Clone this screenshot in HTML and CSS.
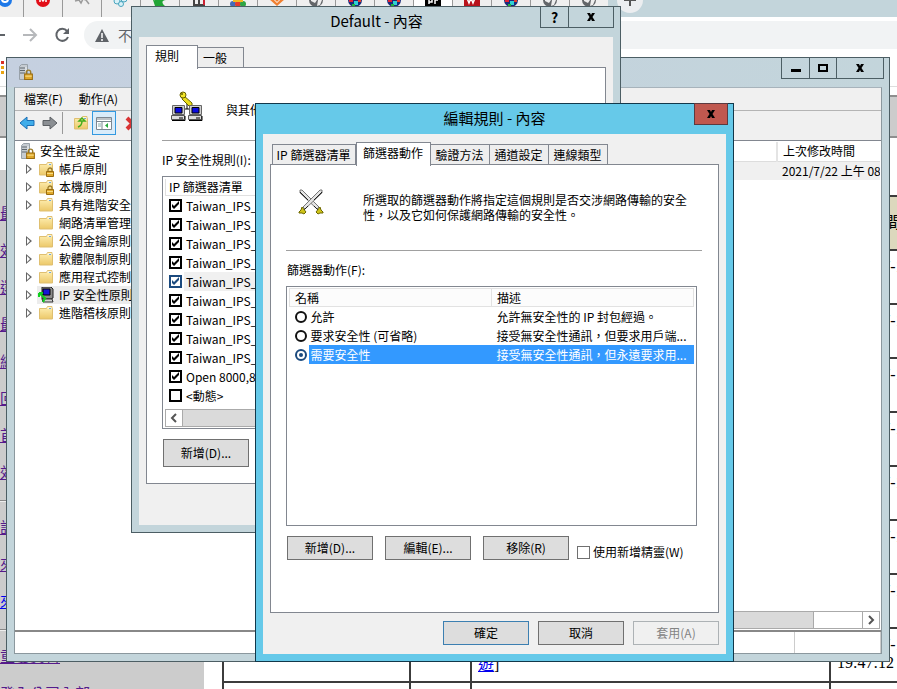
FILE: index.html
```html
<!DOCTYPE html>
<html lang="zh-Hant">
<head>
<meta charset="utf-8">
<title>編輯規則 - 內容</title>
<link rel="stylesheet" href="styles.css">
</head>
<body>
<svg class="defs" aria-hidden="true">
  <defs>
    <linearGradient id="fold" x1="0" y1="0" x2="0" y2="1"><stop offset="0" stop-color="#fff0b4"/><stop offset="1" stop-color="#ecc869"/></linearGradient>
    <symbol id="folder" viewBox="0 0 16 16"><path d="M1.5 3.5h7l1-2h4.5v2h.5v10.500h-13z" fill="url(#fold)" stroke="#dfbf70"/><path d="M9.500 3h4" stroke="#fff" /><path d="M11 3.500h2" stroke="#6ba6dc"/></symbol>
    <symbol id="lock" viewBox="0 0 8 10"><path d="M2 5V3a2 2 0 0 1 4 0v2" fill="none" stroke="#9a7b2a" stroke-width="1.300"/><path d="M.5 4.500h7v5h-7z" fill="#e0a92c" stroke="#9a6c10"/><path d="M1 6.500h6" stroke="#f8dc83"/></symbol>
    <symbol id="folderlock" viewBox="0 0 16 16"><use href="#folder" width="16" height="16"/><use href="#lock" x="8" y="6" width="8" height="10"/></symbol>
    <symbol id="server" viewBox="0 0 16 16"><path d="M1.500 2.500l2-2h6v13l-2 2h-6z" fill="#c6ccd2" stroke="#98a1a9"/><path d="M2 4h5M2 6.500h5M2 9h5" stroke="#5e676f"/><path d="M8 3v11" stroke="#eef1f3"/><use href="#lock" x="6" y="5" width="9" height="11"/></symbol>
    <symbol id="ipsec" viewBox="0 0 16 16"><path d="M4 0h9l2 2v9l-2 1H4z" fill="#8b8b8b" stroke="#222"/><path d="M5 2h7v6H5z" fill="#1515d8" stroke="#000"/><path d="M4 12h10l1 3H5z" fill="#d2d2d2" stroke="#333"/><path d="M1 6l7 6M1 6h4M1 6v4M7 11l-2 4" stroke="#10d020" stroke-width="2"/></symbol>
    <symbol id="globe" viewBox="0 0 16 16"><circle cx="8" cy="8" r="7" fill="#636669"/><path d="M3 4l4 1 2 3-2 3-4-2zM10 8l4 0-2 5-3 1z" fill="#eee"/></symbol>
    <symbol id="multi" viewBox="0 0 16 16"><circle cx="8" cy="8" r="7" fill="#192a7b"/><path d="M2 6h4v4H2z" fill="#e32235"/><path d="M7 9h4v4H7z" fill="#30d1d5"/><path d="M11 6h3v4h-3z" fill="#e43d2b"/><path d="M5 12h3v2H5z" fill="#22b33b"/></symbol>
  </defs>
</svg>

<div class="desktop">
  <div class="browser">
    <div class="tabstrip">
      <div class="btab"><svg viewBox="0 0 16 16"><circle cx="8" cy="8" r="7" fill="#1d78e8"/><circle cx="8" cy="7" r="4" fill="#fff"/><circle cx="8" cy="7" r="2" fill="#1d78e8"/></svg></div>
      <div class="btab"><svg viewBox="0 0 16 16"><circle cx="8" cy="8" r="7" fill="#e20e18"/><path d="M5 10V5l3 4 3-4v5" fill="none" stroke="#fff" stroke-width="1.500"/></svg></div>
      <div class="btab"><svg viewBox="0 0 16 16"><path d="M1 9l4-1 2 3 2-4 3 1 3 4" fill="none" stroke="#9a9a9a" stroke-width="1.500"/></svg></div>
      <div class="btab"><svg viewBox="0 0 16 16"><g fill="#d8f1f8" stroke="#4aa5be"><circle cx="4" cy="9" r="3"/><circle cx="11" cy="7" r="3"/><circle cx="8" cy="12" r="2.500"/></g></svg></div>
      <div class="btab"><svg viewBox="0 0 16 16"><path d="M1 8c4 1 7-3 13 0-4 0-5 3-1 6H3z" fill="#21a535"/></svg></div>
      <div class="btab"><svg viewBox="0 0 16 16"><path d="M2 1h12v13H2z" fill="#444"/><path d="M4 8h3v4H4zM9 8h3v4H9z" fill="#eee"/><path d="M12 7h2v6h-2z" fill="#c23"/></svg></div>
      <div class="btab"><svg viewBox="0 0 16 16"><circle cx="3" cy="12" r="3" fill="#466bb8"/><circle cx="8" cy="12" r="3" fill="#e43b2d"/><circle cx="13" cy="12" r="3" fill="#2da544"/><path d="M3 9h10" stroke="#f4b820" stroke-width="2"/></svg></div>
      <div class="btab"><svg viewBox="0 0 16 16"><path d="M8 0l8 7-8 7-8-7z" fill="#f08030"/><path d="M8 3l4 4-4 4-4-4z" fill="#fff"/><path d="M8 6l2 2-2 2-2-2z" fill="#f08030"/></svg></div>
      <div class="btab"><svg><use href="#globe"/></svg></div>
      <div class="btab"><svg><use href="#multi"/></svg></div>
      <div class="btab"><svg><use href="#multi"/></svg></div>
      <div class="btab current"><svg viewBox="0 0 16 16"><path d="M0 0h16v14H0z" fill="#000"/><path d="M4 12V7h3v3H4M10 12V8h3" fill="none" stroke="#fff" stroke-width="1.500"/></svg></div>
      <div class="btab"><svg viewBox="0 0 16 16"><path d="M0 0h16v14H0z" fill="#b8121b"/><path d="M3 6l2 5 2-5 2 5 2-5" fill="none" stroke="#fff" stroke-width="1.500"/></svg></div>
      <div class="btab"><svg><use href="#multi"/></svg></div>
      <div class="btab"><svg><use href="#globe"/></svg></div>
      <div class="btab"><svg><use href="#globe"/></svg></div>
      <button class="newtab" aria-label="+"><svg viewBox="0 0 28 28"><circle cx="14" cy="14" r="13" fill="#eceef0"/><path d="M14 8v12M8 14h12" stroke="#555" stroke-width="2"/></svg></button>
    </div>
    <div class="navbar">
      <svg class="navicons" viewBox="0 0 76 28"><path d="M-4 14h9" stroke="#5f6368" stroke-width="2"/><path d="M23 14h13M30 8l6 6-6 6" fill="none" stroke="#b6b8bb" stroke-width="2"/><path d="M67 10a6 6 0 1 0 1 6" fill="none" stroke="#5f6368" stroke-width="2"/><path d="M69 7v6h-6z" fill="#5f6368"/></svg>
      <div class="omnibox"><svg viewBox="0 0 14 13"><path d="M7 0l7 13H0z" fill="#5f6368"/><path d="M7 4v5M7 10v2" stroke="#fff" stroke-width="1.500"/></svg><span>不安全</span></div>
    </div>
    <div class="bookmarks"><svg viewBox="0 0 6 16"><path d="M1 1h3v3H1z" fill="#d93025"/><path d="M1 6h3v3H1zM1 11h3v3H1z" fill="#eaa412"/></svg></div>
    <div class="banner"></div>
    <div class="gap"></div>
    <div class="page">
      <nav class="side">
        <a href="#">最新消息</a><a href="#">效能報表</a><a href="#">還原記錄</a><a href="#">最新圖表</a><a href="#">網路設定</a><a href="#">回報問題</a><a href="#">首頁設定</a><a href="#">效能設定</a>
        <hr>
        <a href="#">設定工具</a><a href="#">來源清單</a><a class="fresh" href="#">來源報表</a>
        <hr>
        <a href="#">重要資料</a><a href="#">登入公司內部</a>
      </nav>
      <table class="log">
        <colgroup><col class="c1"><col class="c2"><col class="c3"><col class="c4"></colgroup>
        <tr><th></th><th></th><th></th><th>建立時間</th></tr>
        <tr><td></td><td></td><td></td><td>2021-07-17</td></tr>
        <tr><td></td><td></td><td></td><td>2021-07-17</td></tr>
        <tr><td></td><td></td><td></td><td>2021-07-17</td></tr>
        <tr><td></td><td></td><td></td><td>2021-07-17</td></tr>
        <tr><td></td><td></td><td></td><td>2021-07-17</td></tr>
        <tr><td></td><td></td><td></td><td>2021-07-17</td></tr>
        <tr><td></td><td></td><td></td><td>2021-07-17</td></tr>
        <tr><td></td><td></td><td class="low"><a href="#">遊</a>]</td><td>2021-07-17<br>19:47:12</td></tr>
        <tr><td></td><td></td><td></td><td></td></tr>
      </table>
    </div>
  </div>

  <section class="window console" aria-label="安全性設定">
    <header class="titlebar">
      <svg class="appicon"><use href="#server"/></svg>
      <div class="winbtns">
        <button aria-label="最小化"><svg viewBox="0 0 12 12"><path d="M1 7h10v3H1z"/></svg></button>
        <button aria-label="最大化"><svg viewBox="0 0 12 12"><path d="M2 3h8v6H2z" fill="none" stroke="#000" stroke-width="2"/></svg></button>
        <button class="wide" aria-label="關閉"><svg viewBox="0 0 12 12"><path d="M2 2h3l1 2 1-2h3L7.500 6 10 10H7L6 8l-1 2H2l2.500-4z"/></svg></button>
      </div>
    </header>
    <div class="client">
      <div class="menubar"><button>檔案(F)</button><button>動作(A)</button></div>
      <div class="toolbar">
        <button aria-label="上一頁"><svg viewBox="0 0 16 16"><path d="M1 8l7-6v3.500h7v5H8V14z" fill="#40adea" stroke="#1c6fb5"/></svg></button>
        <button aria-label="下一頁"><svg viewBox="0 0 16 16"><path d="M15 8L8 2v3.500H1v5h7V14z" fill="#8b8f93" stroke="#5b5f63"/></svg></button>
        <span class="sep"></span>
        <button aria-label="上移一層"><svg viewBox="0 0 16 16"><use href="#folder"/><path d="M5 12c3-1 4-3 4-6M6 6l3-3 3 3z" fill="none" stroke="#43ad1c" stroke-width="1.500"/></svg></button>
        <button class="on" aria-label="顯示樹狀目錄"><svg viewBox="0 0 16 16"><path d="M.5 2.500h15v12H.5z" fill="#fff" stroke="#7d8791"/><path d="M1 4h14M1 6.500h14M6 6v8" stroke="#7d8791"/><path d="M2 9h3M2 11h3" stroke="#8aa"/><path d="M12 8v5L9 10.500z" fill="#27a93b"/></svg></button>
        <button class="del" aria-label="刪除"><svg viewBox="0 0 16 16"><path d="M2 3l11 11M13 3L2 14" stroke="#d93434" stroke-width="4"/></svg></button>
      </div>
      <div class="panes">
        <ul class="tree">
          <li class="root"><svg class="ic"><use href="#server"/></svg>安全性設定</li>
          <li><i class="arrow"></i><span><svg class="ic"><use href="#folderlock"/></svg>帳戶原則</span></li>
          <li><i class="arrow"></i><span><svg class="ic"><use href="#folderlock"/></svg>本機原則</span></li>
          <li><i class="arrow"></i><span><svg class="ic"><use href="#folder"/></svg>具有進階安全</span></li>
          <li><i class="arrow none"></i><span><svg class="ic"><use href="#folder"/></svg>網路清單管理</span></li>
          <li><i class="arrow"></i><span><svg class="ic"><use href="#folder"/></svg>公開金鑰原則</span></li>
          <li><i class="arrow"></i><span><svg class="ic"><use href="#folder"/></svg>軟體限制原則</span></li>
          <li><i class="arrow"></i><span><svg class="ic"><use href="#folder"/></svg>應用程式控制</span></li>
          <li><i class="arrow"></i><span class="sel"><svg class="ic"><use href="#ipsec"/></svg>IP 安全性原則</span></li>
          <li><i class="arrow"></i><span><svg class="ic"><use href="#folder"/></svg>進階稽核原則</span></li>
        </ul>
        <div class="detail">
          <table class="grid">
            <colgroup><col><col class="date"></colgroup>
            <tr><th></th><th>上次修改時間</th></tr>
            <tr class="soft"><td></td><td>2021/7/22 上午 08</td></tr>
          </table>
          <div class="hscroll"><span class="thumb"></span><span class="track"></span><button aria-label="向右"><svg viewBox="0 0 8 10"><path d="M2 1l4 4-4 4" fill="none" stroke="#555" stroke-width="2"/></svg></button></div>
        </div>
      </div>
      <div class="status"><span></span><span></span></div>
    </div>
  </section>

  <section class="window default" aria-label="Default - 內容">
    <header class="titlebar">
      <h2>Default - 內容</h2>
      <div class="winbtns"><button>?</button><button class="wide" aria-label="關閉"><svg viewBox="0 0 12 12"><path d="M2 2h3l1 2 1-2h3L7.500 6 10 10H7L6 8l-1 2H2l2.500-4z"/></svg></button></div>
    </header>
    <div class="client">
      <div class="tabs" role="tablist"><button role="tab" aria-selected="true">規則</button><button role="tab" aria-selected="false">一般</button></div>
      <div class="panel">
        <div class="intro">
          <svg viewBox="0 0 32 32"><path d="M16 14v5M10 19h12" stroke="#000" fill="none"/><path d="M12 5l9 8v3h-3l-7-7z" fill="#e9dc1c" stroke="#665f00"/><circle cx="12" cy="5" r="3" fill="#f3e72a" stroke="#665f00"/><circle cx="11" cy="4" r="1" fill="#665f00"/><g id="pc"><path d="M1.500 15.500h12v9h-12z" fill="#cfcfcf" stroke="#666"/><path d="M4 17.500h7v5.500H4z" fill="#0a0ae0" stroke="#000"/><path d="M.5 25.500h13v4H.5z" fill="#dedede" stroke="#555"/><path d="M8 28h4" stroke="#000"/><path d="M1 30.500h13V26" fill="none" stroke="#000"/></g><use href="#pc" x="17"/></svg>
          <p>與其他電腦通訊</p>
        </div>
        <div class="caption">IP 安全性規則(I):</div>
        <div class="rules">
          <div class="head">IP 篩選器清單</div>
          <label><input type="checkbox" checked><span>Taiwan_IPS_5</span></label>
          <label><input type="checkbox" checked><span>Taiwan_IPS_5</span></label>
          <label><input type="checkbox" checked><span>Taiwan_IPS_4</span></label>
          <label><input type="checkbox" checked><span>Taiwan_IPS_4</span></label>
          <label class="soft"><input type="checkbox" checked><span>Taiwan_IPS_3</span></label>
          <label><input type="checkbox" checked><span>Taiwan_IPS_2</span></label>
          <label><input type="checkbox" checked><span>Taiwan_IPS_1</span></label>
          <label><input type="checkbox" checked><span>Taiwan_IPS_1</span></label>
          <label><input type="checkbox" checked><span>Taiwan_IPS_1</span></label>
          <label><input type="checkbox" checked><span>Open 8000,8</span></label>
          <label><input type="checkbox"><span>&lt;動態&gt;</span></label>
          <div class="hscroll"><button aria-label="向左"><svg viewBox="0 0 8 10"><path d="M6 1L2 5l4 4" fill="none" stroke="#555" stroke-width="2"/></svg></button><span class="thumb"></span></div>
        </div>
        <div class="row"><button class="btn tall">新增(D)...</button></div>
      </div>
    </div>
  </section>

  <section class="window edit" aria-label="編輯規則 - 內容">
    <header class="titlebar">
      <h2>編輯規則 - 內容</h2>
      <div class="winbtns"><button class="close" aria-label="關閉"><svg viewBox="0 0 12 12"><path d="M2 2h3l1 2 1-2h3L7.500 6 10 10H7L6 8l-1 2H2l2.500-4z"/></svg></button></div>
    </header>
    <div class="client">
      <div class="tabs" role="tablist">
        <button role="tab" aria-selected="false">IP 篩選器清單</button><button role="tab" aria-selected="true">篩選器動作</button><button role="tab" aria-selected="false">驗證方法</button><button role="tab" aria-selected="false">通道設定</button><button role="tab" aria-selected="false">連線類型</button>
      </div>
      <div class="panel">
        <div class="intro">
          <svg viewBox="0 0 28 26"><g id="sword"><path d="M3 1h2L22 18l-2 2L3 4z" fill="#e4e4e4" stroke="#777"/><path d="M3 3l8 8M17 17l4 4" stroke="#222"/><path d="M19 23l4-5 1 3 2 2v1h-3l-2 1z" fill="#cfc41a" stroke="#6d6700"/></g><use href="#sword" transform="matrix(-1 0 0 1 28 0)"/></svg>
          <p>所選取的篩選器動作將指定這個規則是否交涉網路傳輸的安全性，以及它如何保護網路傳輸的安全性。</p>
        </div>
        <div class="caption">篩選器動作(F):</div>
        <div class="listbox">
          <table class="actions" aria-label="篩選器動作">
            <colgroup><col class="name"><col></colgroup>
            <tr><th>名稱</th><th>描述</th></tr>
            <tr><td><label><input type="radio" name="act"><span>允許</span></label></td><td>允許無安全性的 IP 封包經過。</td></tr>
            <tr><td><label><input type="radio" name="act"><span>要求安全性 (可省略)</span></label></td><td>接受無安全性通訊，但要求用戶端...</td></tr>
            <tr class="picked"><td><label><input type="radio" name="act" checked><span>需要安全性</span></label></td><td>接受無安全性通訊，但永遠要求用...</td></tr>
          </table>
        </div>
        <div class="row">
          <button class="btn">新增(D)...</button><button class="btn">編輯(E)...</button><button class="btn">移除(R)</button>
          <label class="wizard"><input type="checkbox">使用新增精靈(W)</label>
        </div>
      </div>
      <div class="foot"><button class="btn primary">確定</button><button class="btn">取消</button><button class="btn" disabled>套用(A)</button></div>
    </div>
  </section>
</div>
</body>
</html>
```
FILE: styles.css
```css
* { box-sizing: border-box; }
body { margin: 0; font: 12px/16px "Noto Sans CJK TC", sans-serif; color: #000; }
button { font: inherit; color: inherit; margin: 0; padding: 0; border: 0; background: none; }
h2, p, ul { margin: 0; padding: 0; font-weight: normal; }
table { border-collapse: collapse; table-layout: fixed; width: 100%; }
th { font-weight: normal; text-align: left; }
td, th { padding: 0; }
svg { display: block; flex: none; }
.defs { position: absolute; width: 0; height: 0; }
.desktop { position: relative; height: 100vh; overflow: hidden; background: #fff; }

/* browser behind the windows */
.tabstrip { display: flex; height: 17px; overflow: hidden; background: #c3d5db; }
.btab { flex: none; width: 39px; height: 17px; background: #efefef; border-left: 1px solid #999; }
.btab:first-child { width: 23px; border: 0; }
.btab svg { width: 16px; height: 16px; margin: -8px 0 0 11px; }
.btab:first-child svg { margin-left: -3px; }
.btab.current { background: #fff; }
.newtab { margin: -14px 0 0 8px; height: 28px; }
.newtab svg { width: 28px; height: 28px; }
.navbar { display: flex; gap: 8px; height: 32px; padding-top: 4px; }
.navicons { width: 76px; height: 28px; }
.omnibox { flex: 1; display: flex; align-items: center; gap: 9px; padding-left: 11px; height: 28px; border-radius: 14px 0 0 14px; background: #f1f3f4; color: #5f6368; font-size: 14px; }
.omnibox svg { width: 14px; height: 13px; }
.bookmarks { height: 38px; padding-top: 11px; border-bottom: 1px solid #ddd; }
.bookmarks svg { width: 6px; height: 16px; }
.banner { height: 43px; margin-top: 8px; border-top: 2px solid #8e8e8e; border-bottom: 2px solid #8e8e8e; background: #ccc; }
.gap { height: 32px; }
.page { display: flex; gap: 18px; align-items: flex-start; font: 16px/18px "Liberation Serif", "Noto Sans CJK TC", serif; }
.side { flex: none; width: 204px; background: #ccc; padding-top: 26px; }
.side a { display: block; height: 37px; line-height: 37px; color: #551a8b; font-size: 15px; }
.side .fresh { color: #00e; }
.side hr { margin: 8px 0; height: 2px; border: 0; border-top: 1px solid #888; border-bottom: 1px solid #eee; }
.log { flex: none; width: 740px; margin-top: 25px; }
.log .c1 { width: 187px; }
.log .c2 { width: 61px; }
.log .c3 { width: 359px; }
.log td, .log th { border: 2px solid #3c3c3c; padding: 7px 6px; vertical-align: top; white-space: nowrap; height: 54px; }
.log th { background: #dcd8bd; padding: 17px 6px 0; }
.log .low { vertical-align: bottom; }
.log a { color: #00e; }

/* window frame */
.window { position: absolute; display: flex; flex-direction: column; padding: 0 7px 7px; border: 1px solid #4c5e64; background: #c3d5db; }
.titlebar { flex: none; height: 30px; display: flex; justify-content: flex-end; }
.titlebar h2 { flex: 1; text-align: center; font-size: 15px; line-height: 28px; }
.winbtns { display: flex; height: 22px; margin-top: -1px; border: 1px solid #4c5e64; }
.winbtns button { width: 27px; display: grid; place-items: center; font-size: 14px; font-weight: bold; }
.winbtns button + button { border-left: 1px solid #4c5e64; }
.winbtns .wide { width: 46px; }
.winbtns .close { width: 32px; background: #c0584f; }
.winbtns svg { width: 12px; height: 12px; }
.client { flex: 1; background: #f0f0f0; min-height: 0; }
.hscroll { display: flex; height: 18px; border: 1px solid #aaa; background: #fff; }
.hscroll button { width: 16px; display: grid; place-items: center; }
.hscroll button svg { width: 8px; height: 10px; }
.thumb { flex: 1; background: #dadada; border-left: 1px solid #aaa; border-right: 1px solid #aaa; }
.btn { width: 86px; height: 24px; border: 1px solid #707070; background: #ddd; line-height: 20px; }
.btn.tall { height: 28px; }
.btn.primary { border-color: #3c7fb1; }
.btn:disabled { border-color: #adb2b5; background: #f0f0f0; color: #838383; }
.tabs { display: flex; align-items: flex-end; height: 22px; }
.tabs button { height: 20px; border: 1px solid #828790; border-bottom: 0; background: #eee; white-space: nowrap; }
.tabs button + button { border-left-width: 0; }
.tabs [aria-selected="true"] { position: relative; height: 24px; margin-bottom: -2px; padding-bottom: 3px; background: #fff; border-left-width: 0; }
.panel { background: #fff; border: 1px solid #828790; }
.intro { display: flex; border-bottom: 1px solid #a0a0a0; margin-right: 1px; }
.caption { padding: 11px 0 8px 1px; }
.row { display: flex; gap: 12px; margin: 10px 0 0 1px; }

/* console */
.console { inset: 57px 7px 27px 6px; background: #c3d5db linear-gradient(90deg, #c5d0e0, #c3d5db) no-repeat 0 0 / 100% 29px; }
.console .titlebar { height: 29px; }
.console .appicon { width: 16px; height: 16px; margin: 6px auto 0 4px; }
.console .winbtns { margin-right: -2px; }
.console .winbtns .wide { width: 47px; }
.console .client { display: flex; flex-direction: column; border: 1px solid #8b989e; border-top-color: #a7b3bb; }
.menubar { display: flex; flex: none; gap: 16px; height: 23px; padding: 0 0 1px 9px; border-bottom: 1px solid #b4b4b4; }
.toolbar { display: flex; flex: none; align-items: center; height: 29px; padding: 0 0 6px 4px; gap: 7px; }
.toolbar svg { width: 16px; height: 16px; }
.toolbar .sep { width: 1px; height: 22px; background: #999; margin: 0 3px 0 -3px; }
.toolbar .on { border: 1px solid #3399e0; background: #d9ecfa; padding: 3px; margin-left: -4px; }
.toolbar .del { margin-left: 2px; }
.panes { flex: 1; min-height: 0; display: grid; grid-template-columns: 300px 1fr; border-top: 1px solid #828790; border-bottom: 2px solid #888; background: #fff; }
.tree { list-style: none; padding-top: 1px; border-right: 1px solid #828790; overflow: hidden; }
.tree li { display: flex; align-items: center; height: 18px; padding-left: 11px; gap: 5px; white-space: nowrap; }
.tree .root { padding-left: 5px; gap: 4px; }
.tree span { display: flex; align-items: center; gap: 5px; height: 18px; padding-left: 1px; }
.tree .sel { flex: 1; background: #ececec; }
.ic { width: 16px; height: 16px; }
.arrow { width: 6px; height: 10px; background: #666; clip-path: polygon(0 0, 100% 50%, 0 100%, 0 0, 1px 2px, 1px 8px, 4px 50%, 1px 2px); }
.arrow.none { background: none; }
.detail { display: flex; flex-direction: column; justify-content: space-between; border-left: 1px solid #828790; min-width: 0; padding: 1px; }
.grid .date { width: 103px; }
.grid td, .grid th { height: 19px; padding-left: 5px; white-space: nowrap; overflow: hidden; }
.grid th { border-bottom: 1px solid #ddd; border-left: 2px solid #e4e4e4; }
.soft td, .soft span { background: #f0f0f0; }
.detail .track { width: 49px; border-right: 1px solid #aaa; }
.status { flex: none; display: flex; justify-content: flex-end; height: 21px; background: #fff; }
.status span { width: 86px; border-left: 1px solid #ccc; }
.status span + span { width: 1px; }

/* rule list dialog */
.default { left: 131px; top: 6px; width: 490px; }
.default .winbtns { margin-right: -1px; }
.default .winbtns .wide { width: 45px; }
.default .titlebar h2 { padding-left: 74px; }
.default .client { padding: 8px 7px 41px; }
.default .tabs button { padding: 0 16px 0 5px; }
.default .tabs [aria-selected="true"] { padding: 0 18px 3px 8px; border-left-width: 1px; }
.default .panel { padding: 0 15px 16px; }
.default .intro { height: 73px; padding: 22px 0 0 9px; gap: 23px; }
.default .intro svg { width: 32px; height: 32px; }
.default .intro p { padding-top: 12px; }
.default .caption { padding-left: 0; }
.rules { border: 1px solid #828790; padding: 2px 2px 1px; }
.rules .head { height: 17px; line-height: 16px; padding-left: 3px; border: 1px solid #e0e0e0; border-top: 0; }
.rules label { display: flex; align-items: center; height: 19px; padding-left: 4px; gap: 2px; }
.rules label span { flex: 1; padding-left: 2px; line-height: 19px; }
.rules .hscroll { margin-top: 4px; }
input { appearance: none; flex: none; display: grid; place-items: center; width: 13px; height: 13px; margin: 0; border: 1px solid #707070; background: #fff; }
.rules input { border: 2px solid #000; }
.rules input:checked::after { content: ""; width: 9px; height: 9px; background: #000; clip-path: polygon(1px 3px, 3px 5px, 8px 0, 8px 3px, 3px 8px, 1px 6px); }
.rules .soft input { border-color: #1b4a7e; }
.rules .soft input:checked::after { background: #1b4a7e; }

/* edit rule dialog */
.edit { left: 255px; top: 103px; width: 479px; border-color: #12384a; background: #66c9e9; }
.edit .winbtns { margin: -1px -2px 0 0; border-color: #5c3a40; }
.edit .titlebar h2 { padding-left: 32px; }
.edit .client { padding: 8px 7px 9px; }
.edit .tabs { padding-left: 2px; }
.edit .tabs button { width: 59px; padding-right: 1px; }
.edit .tabs button:first-child { width: 84px; }
.edit .tabs [aria-selected="true"] { width: 75px; border-left-width: 1px; }
.edit .panel { padding: 0 15px 52px; }
.edit .intro { height: 86px; padding: 24px 0 0 11px; gap: 38px; }
.edit .intro svg { width: 28px; height: 26px; }
.edit .intro p { width: 326px; line-height: 15px; padding-top: 3px; }
.listbox { height: 240px; margin-right: 6px; border: 1px solid #828790; padding: 1px 2px; }
.actions .name { width: 202px; }
.actions td, .actions th { height: 19px; padding-left: 5px; white-space: nowrap; line-height: 16px; }
.actions th { height: 18px; border: 1px solid #e2e2e2; background: #fcfcfc; }
.actions td:first-child { padding: 0; }
.actions label { display: flex; align-items: center; gap: 2px; height: 19px; padding-left: 5px; }
.actions label span { flex: 1; padding-left: 2px; line-height: 19px; }
.actions input { width: 12px; height: 12px; border: 2px solid #111; border-radius: 50%; }
.actions input:checked { border-color: #1b4a7e; }
.actions input:checked::after { content: ""; width: 4px; height: 4px; border-radius: 50%; background: #1b4a7e; }
.picked span, .picked td + td { background: #3399ff; color: #fff; }
.wizard { display: flex; align-items: center; gap: 3px; height: 16px; margin: 8px 0 0 -4px; white-space: nowrap; }
.foot { display: flex; justify-content: flex-end; gap: 9px; margin-top: 8px; }
```
